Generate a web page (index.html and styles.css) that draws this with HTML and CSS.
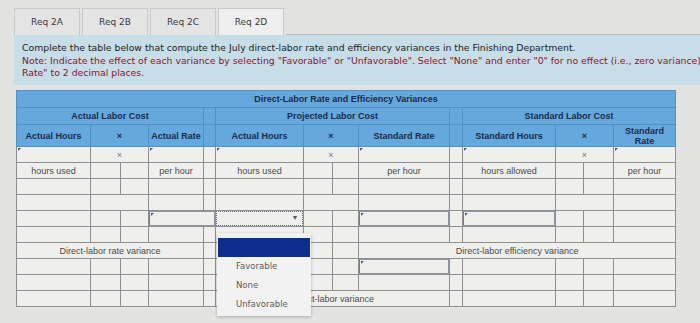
FILE: index.html
```html
<!DOCTYPE html>
<html lang="en">
<head>
    <meta charset="UTF-8">
    <meta name="viewport" content="width=device-width, initial-scale=1.0">
    <title>Req 2D</title>
    <link rel="stylesheet" href="styles.css">
</head>
<body>
    <div class="tabs">
        <div class="tab">Req 2A</div>
        <div class="tab">Req 2B</div>
        <div class="tab">Req 2C</div>
        <div class="tab active">Req 2D</div>
        <div class="tab-rest"></div>
    </div>

    <div class="instructions">
        Complete the table below that compute the July direct-labor rate and efficiency variances in the Finishing Department.<br>
        <span class="note">Note: Indicate the effect of each variance by selecting "Favorable" or "Unfavorable". Select "None" and enter "0" for no effect (i.e., zero variance). Round "Standard<br>
        Rate" to 2 decimal places.</span>
    </div>

    <div class="sheet">
        <table>
            <colgroup>
                <col style="width:74px"><col style="width:30px"><col style="width:28px"><col style="width:55px"><col style="width:12px">
                <col style="width:88px"><col style="width:29px"><col style="width:26px"><col style="width:91px"><col style="width:13px">
                <col style="width:93px"><col style="width:28px"><col style="width:30px"><col style="width:62px">
            </colgroup>
            <tr class="h1">
                <th colspan="14">Direct-Labor Rate and Efficiency Variances</th>
            </tr>
            <tr class="h2">
                <th colspan="4">Actual Labor Cost</th>
                <th></th>
                <th colspan="4">Projected Labor Cost</th>
                <th></th>
                <th colspan="4">Standard Labor Cost</th>
            </tr>
            <tr class="h3">
                <th>Actual Hours</th>
                <th colspan="2">×</th>
                <th>Actual Rate</th>
                <th></th>
                <th>Actual Hours</th>
                <th colspan="2">×</th>
                <th>Standard Rate</th>
                <th></th>
                <th>Standard Hours</th>
                <th colspan="2">×</th>
                <th class="two-line">Standard<br>Rate</th>
            </tr>

            <!-- amounts -->
            <tr>
                <td class="inp"></td><td colspan="2" class="times">×</td><td class="inp"></td><td></td>
                <td class="inp"></td><td colspan="2" class="times">×</td><td class="inp"></td><td></td>
                <td class="inp"></td><td colspan="2" class="times">×</td><td class="inp"></td>
            </tr>
            <tr>
                <td>hours used</td><td></td><td></td><td>per hour</td><td></td>
                <td>hours used</td><td></td><td></td><td>per hour</td><td></td>
                <td>hours allowed</td><td></td><td></td><td>per hour</td>
            </tr>
            <tr>
                <td></td><td></td><td></td><td></td><td></td>
                <td></td><td></td><td></td><td></td><td></td>
                <td></td><td></td><td></td><td></td>
            </tr>
            <tr>
                <td></td><td colspan="2"></td><td></td><td></td>
                <td></td><td colspan="2"></td><td></td><td></td>
                <td></td><td colspan="2"></td><td></td>
            </tr>

            <!-- variances -->
            <tr>
                <td></td><td></td><td></td><td colspan="2" class="box"><div class="field"></div></td>
                <td class="box"><div class="select"><span class="arrow">▾</span></div></td><td></td><td></td>
                <td class="box"><div class="field"></div></td><td></td>
                <td class="box"><div class="field"></div></td><td></td><td></td><td></td>
            </tr>
            <tr>
                <td></td><td></td><td></td><td></td><td></td>
                <td></td><td></td><td></td><td></td><td></td>
                <td></td><td></td><td></td><td></td>
            </tr>
            <tr>
                <td colspan="4">Direct-labor rate variance</td><td></td>
                <td></td><td></td><td></td>
                <td colspan="6">Direct-labor efficiency variance</td>
            </tr>
            <tr>
                <td></td><td></td><td></td><td></td><td></td>
                <td></td><td></td><td></td><td class="box"><div class="field"></div></td><td></td>
                <td></td><td></td><td></td><td></td>
            </tr>
            <tr>
                <td></td><td></td><td></td><td></td><td></td>
                <td></td><td></td><td></td><td></td><td></td>
                <td></td><td></td><td></td><td></td>
            </tr>
            <tr>
                <td></td><td></td><td></td><td></td><td></td>
                <td colspan="4">Direct-labor variance</td><td></td>
                <td></td><td></td><td></td><td></td>
            </tr>
        </table>

        <div class="dropdown">
            <div class="opt selected"></div>
            <div class="opt">Favorable</div>
            <div class="opt">None</div>
            <div class="opt">Unfavorable</div>
        </div>
    </div>
</body>
</html>
```

FILE: styles.css
```css
/* Worksheet tab: Req 2D */
body {
    margin: 0;
    padding: 0;
    background-color: #e2e2e1;
    font-family: "DejaVu Sans", Verdana, sans-serif;
    overflow: hidden;
    width: 700px;
    height: 323px;
}

/* tabs */
.tabs {
    display: flex;
    gap: 2px;
    padding: 8px 0 0 14px;
    height: 27px;
}

.tab {
    width: 66px;
    height: 27px;
    box-sizing: border-box;
    border: 1px solid #c9c9c9;
    border-bottom: none;
    background-color: #e4e4e4;
    display: flex;
    align-items: center;
    justify-content: center;
    font-size: 9px;
    color: #3a3a3a;
}

.tab.active {
    background-color: #efefef;
}

.tab-rest {
    flex: 1;
    border-bottom: 1px solid #b9b9b9;
}

/* instructions */
.instructions {
    margin-left: 14px;
    width: 686px;
    height: 50px;
    box-sizing: border-box;
    padding: 7px 0 0 8px;
    background-color: #c7dde7;
    font-size: 9.3px;
    line-height: 12.5px;
    color: #222;
    white-space: nowrap;
    overflow: hidden;
}

.note {
    color: #7c2131;
}

/* table */
.sheet {
    position: relative;
    margin: 5px 0 0 16px;
    width: 659px;
}

table {
    border-collapse: collapse;
    table-layout: fixed;
    width: 659px;
    font-family: "Liberation Sans", Arial, sans-serif;
    font-size: 9px;
    color: #4a4a4a;
    background-color: #efefee;
}

th,
td {
    padding: 0;
    text-align: center;
    border: 1px solid #8f8f8f;
    height: 15px;
    white-space: nowrap;
}

th {
    background-color: #64a8de;
    border-color: #5290c6;
    color: #1d2b47;
    font-weight: bold;
}

.h1 th,
.h2 th {
    height: 16px;
}

.h3 th {
    height: 21px;
}

.two-line {
    line-height: 10px;
}

.times {
    color: #7a7a7a;
    font-size: 9px;
}

.inp,
.box {
    position: relative;
}

.inp::before,
.field::before {
    content: "";
    position: absolute;
    top: 1px;
    left: 1px;
    border-top: 3px solid #3b5b8c;
    border-right: 3px solid transparent;
}

.field {
    position: absolute;
    top: 0;
    left: 0;
    right: 0;
    bottom: 0;
    border: 1px solid #8c96a6;
    border-left-color: #5a80b4;
}

.select {
    position: absolute;
    top: 0;
    left: 0;
    right: 0;
    bottom: 0;
    border: 1px dotted #6b6b6b;
}

.arrow {
    position: absolute;
    right: 5px;
    top: 1px;
    font-size: 8px;
    color: #555;
}

/* open select list */
.dropdown {
    position: absolute;
    left: 201px;
    top: 143px;
    width: 94px;
    padding-top: 5px;
    padding-bottom: 2px;
    background-color: #f2f2f2;
    box-shadow: 0 1px 3px rgba(0, 0, 0, 0.25);
    font-family: "DejaVu Sans", Verdana, sans-serif;
    font-size: 8.5px;
    color: #5a5a5a;
}

.opt {
    height: 19px;
    line-height: 19px;
    padding-left: 19px;
}

.opt.selected {
    background-color: #0c2f8e;
    margin: 0 1px;
}
```
